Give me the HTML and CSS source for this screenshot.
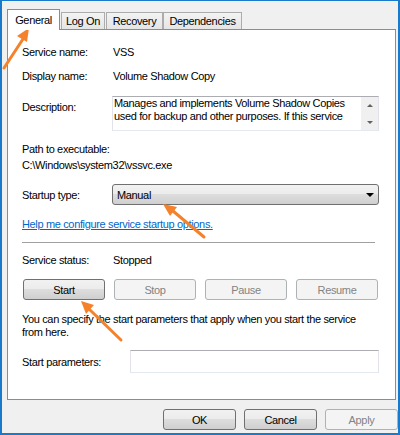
FILE: index.html
```html
<!DOCTYPE html>
<html lang="en">

<head>
  <meta charset="UTF-8">
  <meta name="viewport" content="width=device-width, initial-scale=1.0">
  <title>VSS Properties</title>
  <link rel="stylesheet" href="styles.css">
</head>

<body>
  <div class="window">
    <div class="tabs">
      <div class="tab tab-general active">General</div>
      <div class="tab tab-logon">Log On</div>
      <div class="tab tab-recovery">Recovery</div>
      <div class="tab tab-deps">Dependencies</div>
    </div>

    <div class="panel">
      <div class="field first">
        <span class="label">Service name:</span>
        <span class="value">VSS</span>
      </div>
      <div class="field display-name">
        <span class="label">Display name:</span>
        <span class="value">Volume Shadow Copy</span>
      </div>
      <div class="field description">
        <span class="label">Description:</span>
        <div class="textbox">
          <div class="textbox-text">Manages and implements Volume Shadow Copies<br>used for backup and other purposes. If this service</div>
          <div class="scrollbar">
            <span class="arrow-up"></span>
            <span class="arrow-down"></span>
          </div>
        </div>
      </div>
      <div class="path-label">Path to executable:</div>
      <div class="path-value">C:\Windows\system32\vssvc.exe</div>
      <div class="field startup">
        <span class="label">Startup type:</span>
        <div class="dropdown">
          <span>Manual</span>
          <span class="caret"></span>
        </div>
      </div>
      <a class="help-link" href="#">Help me configure service startup options.</a>
      <div class="separator"></div>
      <div class="field status">
        <span class="label">Service status:</span>
        <span class="value">Stopped</span>
      </div>
      <div class="service-buttons">
        <button class="btn">Start</button>
        <button class="btn" disabled>Stop</button>
        <button class="btn" disabled>Pause</button>
        <button class="btn" disabled>Resume</button>
      </div>
      <p class="hint">You can specify the start parameters that apply when you start the service<br>from here.</p>
      <div class="field params">
        <span class="label params-label">Start parameters:</span>
        <div class="input"></div>
      </div>
    </div>

    <div class="actions">
      <button class="btn">OK</button>
      <button class="btn">Cancel</button>
      <button class="btn" disabled>Apply</button>
    </div>
  </div>

  <!-- annotation arrows drawn over the dialog -->
  <svg class="arrows" width="400" height="435" viewBox="0 0 400 435">
    <g stroke="#f5822a" stroke-width="3" stroke-linecap="round" fill="none">
      <line x1="4" y1="68" x2="23" y2="39" />
      <line x1="204" y1="237" x2="173" y2="211" />
      <line x1="121" y1="340" x2="89" y2="309" />
    </g>
    <g fill="#f5822a">
      <polygon points="29,28 27,42 17,36" />
      <polygon points="163,204 177,207 170,216" />
      <polygon points="81,301 94,305 86,314" />
    </g>
  </svg>
</body>

</html>
```

FILE: styles.css
```css
body {
  margin: 0;
  font-family: "Liberation Sans", Arial, sans-serif;
  font-size: 11px;
  letter-spacing: -0.35px;
  color: #000;
  position: relative;
}

.window {
  width: 400px;
  height: 435px;
  box-sizing: border-box;
  border: solid #1979ca;
  border-width: 1px 2px 2px;
  background-color: #f0f0f0;
  padding: 8px 2px 0 5px;
}

/* tabs */
.tabs {
  display: flex;
  align-items: flex-end;
  height: 20px;
}

.tab {
  box-sizing: border-box;
  height: 17px;
  border: 1px solid #acacac;
  border-bottom: none;
  background: linear-gradient(#f3f3f3, #e5e5e5);
  display: flex;
  align-items: center;
  justify-content: center;
  margin-right: 1px;
}

.tab.active {
  height: 21px;
  margin-bottom: -1px;
  background: #fff;
  border-color: #898c95;
  position: relative;
  z-index: 1;
}

.tab-general { width: 53px; }
.tab-logon { width: 44px; }
.tab-recovery { width: 57px; margin-right: 0; }
.tab-deps { width: 79px; }

/* tab page */
.panel {
  box-sizing: border-box;
  height: 371px;
  border: 1px solid #898c95;
  background: #fff;
  padding: 15px 16px 0 14px;
}

.field {
  display: flex;
  align-items: center;
  line-height: 14px;
}

.label {
  width: 90px;
  flex: none;
}

.value {
  padding-left: 1px;
}

.display-name {
  margin-top: 10px;
}

.description {
  margin-top: 13px;
  align-items: flex-start;
}

.description .label {
  padding-top: 4px;
}

.textbox {
  box-sizing: border-box;
  width: 267px;
  height: 35px;
  border: 1px solid #e2e3ea;
  border-top-color: #abadb3;
  border-bottom-color: #e3e9ef;
  display: flex;
  overflow: hidden;
}

.textbox-text {
  flex: 1;
  padding-left: 1px;
  line-height: 13px;
  white-space: nowrap;
  overflow: hidden;
}

.scrollbar {
  width: 17px;
  flex: none;
  background: #f0f0f0;
  display: flex;
  flex-direction: column;
  align-items: center;
  justify-content: space-between;
  padding: 7px 0 6px;
  box-sizing: border-box;
}

.arrow-up,
.arrow-down {
  width: 0;
  height: 0;
  border-left: 3px solid transparent;
  border-right: 3px solid transparent;
}

.arrow-up {
  border-bottom: 3px solid #606060;
}

.arrow-down {
  border-top: 3px solid #606060;
}

.path-label {
  margin-top: 11px;
  line-height: 14px;
}

.path-value {
  margin-top: 2px;
  line-height: 14px;
}

.startup {
  margin-top: 12px;
}

.dropdown {
  box-sizing: border-box;
  width: 267px;
  height: 21px;
  border: 1px solid #707070;
  border-radius: 3px;
  background: linear-gradient(#f2f2f2 0%, #ebebeb 50%, #dddddd 50%, #cfcfcf 100%);
  display: flex;
  align-items: center;
  justify-content: space-between;
  padding: 0 4px 0 4px;
}

.caret {
  width: 0;
  height: 0;
  border-left: 4px solid transparent;
  border-right: 4px solid transparent;
  border-top: 4px solid #000;
}

.help-link {
  display: inline-block;
  margin-top: 12px;
  line-height: 14px;
  color: #0066cc;
}

.separator {
  margin-top: 11px;
  width: 353px;
  height: 1px;
  background-color: #a0a0a0;
}

.status {
  margin-top: 10px;
}

.service-buttons {
  margin: 12px 0 0 1px;
  width: 355px;
  display: grid;
  grid-template-columns: repeat(4, 1fr);
  gap: 9px;
}

.btn {
  box-sizing: border-box;
  height: 21px;
  padding: 0;
  font-family: inherit;
  font-size: 11px;
  letter-spacing: inherit;
  color: #000;
  border: 1px solid #707070;
  border-radius: 3px;
  background: linear-gradient(#f2f2f2 0%, #ebebeb 50%, #dddddd 50%, #cfcfcf 100%);
}

.btn:disabled {
  color: #838383;
  border-color: #adb2b5;
  background: #f4f4f4;
}

.hint {
  margin: 13px 0 0;
  line-height: 13px;
  white-space: nowrap;
}

.params {
  margin-top: 11px;
}

.params-label {
  width: 108px;
}

.input {
  box-sizing: border-box;
  width: 249px;
  height: 23px;
  border: 1px solid #e2e3ea;
  border-top-color: #abadb3;
  border-bottom-color: #e3e9ef;
}

/* dialog buttons */
.actions {
  margin: 9px -2px 0 0;
  display: flex;
  justify-content: flex-end;
  gap: 8px;
}

.actions .btn {
  width: 73px;
}

.arrows {
  position: absolute;
  top: 0;
  left: 0;
  pointer-events: none;
}
```
